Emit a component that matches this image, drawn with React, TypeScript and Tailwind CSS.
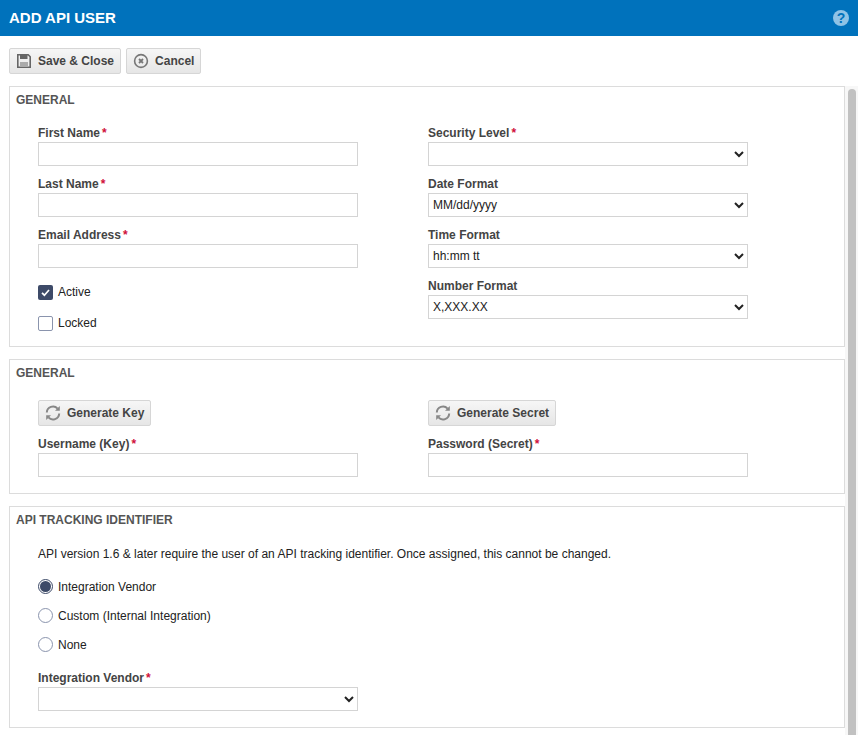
import type { ReactNode } from "react";

const font = "font-['Liberation_Sans',Arial,sans-serif]";

const Field = ({ label, required, children }: { label: string; required?: boolean; children: ReactNode }) => (
  <div className="w-[320px]">
    <div className="h-[17px] text-[12px] leading-[17px] font-bold text-[#444]">
      {label}
      {required && <span className="ml-[2px] text-[#d0103a]">*</span>}
    </div>
    {children}
  </div>
);

const TextInput = () => (
  <input type="text" className="block h-[24px] w-[320px] border border-[#d4d4d4] bg-white px-1 text-[12px]" />
);

const Select = ({ value }: { value?: string }) => (
  <select
    defaultValue={value}
    className="block h-[24px] w-[320px] rounded-none border border-[#d4d4d4] bg-white text-[12px] text-[#222]"
  >
    {value ? <option>{value}</option> : <option></option>}
  </select>
);

const ToolButton = ({ icon, label }: { icon: ReactNode; label: string }) => (
  <button className="flex h-[26px] items-center gap-[6px] rounded-[2px] border border-[#d6d6d6] bg-gradient-to-b from-[#f6f6f6] to-[#e6e6e6] px-[6px] text-[12px] font-bold text-[#444]">
    {icon}
    {label}
  </button>
);

const SaveIcon = () => (
  <svg width="16" height="16" viewBox="0 0 16 16" fill="none">
    <path d="M1.8 1.8h10.4l2 2v10.4H1.8z" stroke="#666" strokeWidth="1.6" />
    <rect x="4" y="1.5" width="7.5" height="4.5" fill="#666" />
    <rect x="4" y="9" width="8" height="5" fill="#aaa" />
  </svg>
);

const CancelIcon = () => (
  <svg width="16" height="16" viewBox="0 0 16 16" fill="none">
    <circle cx="8" cy="8" r="6.4" stroke="#777" strokeWidth="1.6" />
    <path d="M6 6l4 4M10 6l-4 4" stroke="#777" strokeWidth="1.8" />
  </svg>
);

const RefreshIcon = () => (
  <svg width="16" height="16" viewBox="0 0 16 16" fill="none">
    <path d="M1.8 7.5A6.2 6.2 0 0 1 12.6 3.6" stroke="#888" strokeWidth="2" />
    <path d="M14.2 8.5A6.2 6.2 0 0 1 3.4 12.4" stroke="#888" strokeWidth="2" />
    <path d="M14.8 1v4.8H10z" fill="#888" />
    <path d="M1.2 15v-4.8H6z" fill="#888" />
  </svg>
);

const Check = ({ label, checked }: { label: string; checked?: boolean }) => (
  <div className="flex h-[16px] items-center gap-[5px] text-[12px] text-[#222]">
    <span
      className={
        checked
          ? "flex h-[15px] w-[15px] items-center justify-center rounded-[2px] bg-[#3d4a68]"
          : "h-[15px] w-[15px] rounded-[2px] border border-[#8a94ad] bg-white"
      }
    >
      {checked && (
        <svg width="11" height="11" viewBox="0 0 11 11" fill="none">
          <path d="M2 5.8l2.4 2.4L9 3" stroke="white" strokeWidth="1.7" />
        </svg>
      )}
    </span>
    {label}
  </div>
);

const Radio = ({ label, checked }: { label: string; checked?: boolean }) => (
  <div className="flex h-[15px] items-center gap-[5px] text-[12px] text-[#222]">
    <span
      className={
        checked
          ? "flex h-[15px] w-[15px] items-center justify-center rounded-full border border-[#3d4a68] bg-white"
          : "h-[15px] w-[15px] rounded-full border border-[#8a94ad] bg-white"
      }
    >
      {checked && <span className="h-[11px] w-[11px] rounded-full bg-[#3d4a68]" />}
    </span>
    {label}
  </div>
);

const Section = ({ title, className, children }: { title: string; className: string; children: ReactNode }) => (
  <section className={`border border-[#dcdcdc] bg-white ${className}`}>
    <h2 className="px-[6px] pt-[6px] text-[12px] leading-[15px] font-bold text-[#555]">{title}</h2>
    <div className="pl-[28px]">{children}</div>
  </section>
);

export default function App() {
  return (
    <div className={`flex h-[735px] w-[858px] flex-col overflow-hidden bg-white ${font}`}>
      <header className="flex h-[36px] shrink-0 items-center justify-between bg-[#0072bc] pr-[9px] pl-[9px]">
        <h1 className="text-[15px] font-bold text-white">ADD API USER</h1>
        <span className="flex h-[16px] w-[16px] items-center justify-center rounded-full bg-[#8fc3e6] text-[14px] font-bold text-[#0072bc]">
          ?
        </span>
      </header>

      <div className="flex min-h-0 flex-1">
        <main className="w-[845px] shrink-0 pl-[9px]">
          <div className="flex gap-[5px] pt-[12px] pb-[12px]">
            <ToolButton icon={<SaveIcon />} label="Save & Close" />
            <ToolButton icon={<CancelIcon />} label="Cancel" />
          </div>

          <Section title="GENERAL" className="h-[261px]">
            <div className="flex gap-[70px] pt-[17px]">
              <div className="flex flex-col gap-[10px]">
                <Field label="First Name" required><TextInput /></Field>
                <Field label="Last Name" required><TextInput /></Field>
                <Field label="Email Address" required><TextInput /></Field>
                <div className="mt-[6px] flex flex-col gap-[15px]">
                  <Check label="Active" checked />
                  <Check label="Locked" />
                </div>
              </div>
              <div className="flex flex-col gap-[10px]">
                <Field label="Security Level" required><Select /></Field>
                <Field label="Date Format"><Select value="MM/dd/yyyy" /></Field>
                <Field label="Time Format"><Select value="hh:mm tt" /></Field>
                <Field label="Number Format"><Select value="X,XXX.XX" /></Field>
              </div>
            </div>
          </Section>

          <Section title="GENERAL" className="mt-[12px] h-[135px]">
            <div className="flex gap-[70px] pt-[19px]">
              <div className="w-[320px]">
                <ToolButton icon={<RefreshIcon />} label="Generate Key" />
                <div className="mt-[10px]">
                  <Field label="Username (Key)" required><TextInput /></Field>
                </div>
              </div>
              <div className="w-[320px]">
                <ToolButton icon={<RefreshIcon />} label="Generate Secret" />
                <div className="mt-[10px]">
                  <Field label="Password (Secret)" required><TextInput /></Field>
                </div>
              </div>
            </div>
          </Section>

          <Section title="API TRACKING IDENTIFIER" className="mt-[12px] h-[222px]">
            <p className="pt-[19px] text-[12px] leading-[15px] text-[#222]">
              API version 1.6 &amp; later require the user of an API tracking identifier. Once assigned, this cannot be changed.
            </p>
            <div className="flex flex-col gap-[14px] pt-[17px]">
              <Radio label="Integration Vendor" checked />
              <Radio label="Custom (Internal Integration)" />
              <Radio label="None" />
            </div>
            <div className="pt-[18px]">
              <Field label="Integration Vendor" required><Select /></Field>
            </div>
          </Section>
        </main>

        <div className="mt-[50px] flex-1 bg-[#f7f7f7] pt-[3px] pr-[2px] pl-[3px]">
          <div className="h-full rounded-t-full bg-[#c1c1c1]" />
        </div>
      </div>
    </div>
  );
}
